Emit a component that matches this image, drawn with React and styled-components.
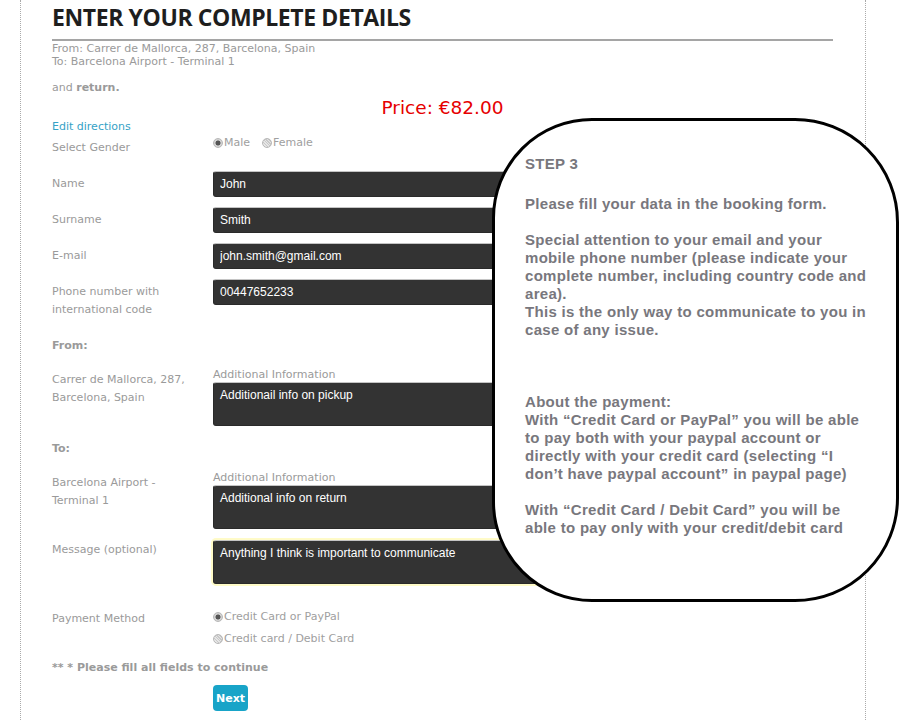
import React from 'react';
import styled, { createGlobalStyle } from 'styled-components';

const GlobalStyle = createGlobalStyle`
  body {
    margin: 0;
    background: #fff;
    font-family: "DejaVu Sans", Verdana, sans-serif;
    overflow: hidden;
  }
`;

const Page = styled.div`
  position: relative;
  box-sizing: border-box;
  width: 846px;
  min-height: 720px;
  margin-left: 20px;
  padding: 0 32px 0 31px;
  border-left: 1px dotted #aaa;
  border-right: 1px dotted #aaa;
`;

const Title = styled.h1`
  margin: 0;
  padding: 1px 0 6px;
  font-family: "Open Sans", sans-serif;
  font-size: 23px;
  letter-spacing: -0.4px;
  line-height: 32px;
  font-weight: 700;
  color: #1e1e1e;
  border-bottom: 2px solid #a5a5a5;
`;

const Route = styled.div`
  margin-top: 1px;
  font-size: 11px;
  line-height: 13px;
  color: #9a9a9a;

  b {
    font-weight: 700;
  }
`;

const Price = styled.div`
  margin-top: 3px;
  text-align: center;
  font-size: 18.5px;
  line-height: 22px;
  color: #e60000;
`;

const EditLink = styled.a`
  display: block;
  font-size: 11px;
  line-height: 15px;
  color: #36a2c6;
  text-decoration: none;
`;

const Row = styled.div`
  display: grid;
  grid-template-columns: 161px 1fr;
  align-items: start;
  margin-top: ${(p) => p.$top || 0}px;
`;

const Label = styled.div`
  padding-top: ${(p) => p.$pad ?? 4}px;
  font-size: 11px;
  line-height: 18px;
  color: #9a9a9a;
`;

const Section = styled.div`
  margin-top: ${(p) => p.$top}px;
  font-size: 11px;
  line-height: 18px;
  font-weight: 700;
  color: #9a9a9a;
`;

const RadioGroup = styled.div`
  display: flex;
  flex-direction: ${(p) => (p.$column ? 'column' : 'row')};
  gap: ${(p) => (p.$column ? 0 : 12)}px;
`;

const RadioItem = styled.label`
  display: flex;
  align-items: center;
  font-size: 11px;
  line-height: ${(p) => p.$lh || 18}px;
  color: #a0a0a0;
`;

const Dot = styled.span`
  box-sizing: border-box;
  width: 10px;
  height: 10px;
  margin-right: 1px;
  border-radius: 50%;
  border: 1px solid #b8b8b8;
  background: ${(p) =>
    p.$checked
      ? 'radial-gradient(circle, #555 0 2.2px, #d2d2d2 2.8px)'
      : 'repeating-linear-gradient(45deg, #e6e6e6 0 1px, #c8c8c8 1px 2px)'};
`;

const TextInput = styled.input`
  box-sizing: border-box;
  display: block;
  width: 340px;
  height: 26px;
  padding: 0 6px;
  border: 1px solid #2a2a2a;
  border-top-color: #c4c4c4;
  border-radius: 3px;
  background: #333;
  color: #fff;
  font-family: "Liberation Sans", Arial, sans-serif;
  font-size: 12px;
  outline: none;
`;

const Caption = styled.div`
  font-size: 11px;
  line-height: 14px;
  color: #9a9a9a;
`;

const TextArea = styled.textarea`
  box-sizing: border-box;
  display: block;
  width: 340px;
  height: ${(p) => p.$h || 44}px;
  padding: 5px 6px;
  resize: none;
  border: 1px solid #2a2a2a;
  border-top-color: #c4c4c4;
  border-radius: 3px;
  background: #333;
  color: #fff;
  font-family: "Liberation Sans", Arial, sans-serif;
  font-size: 12px;
  line-height: 14px;
  outline: none;
  box-shadow: ${(p) => (p.$glow ? '0 0 0 2px #fffbc8' : 'none')};
`;

const Note = styled.div`
  margin-top: 9px;
  font-size: 11px;
  line-height: 18px;
  font-weight: 700;
  color: #9a9a9a;
`;

const Actions = styled.div`
  margin: 8px 0 0 161px;
`;

const NextButton = styled.button`
  height: 26px;
  padding: 0 3px;
  border: 0;
  border-radius: 4px;
  background: #18a4c8;
  color: #fff;
  font-family: "DejaVu Sans", Verdana, sans-serif;
  font-size: 11px;
  font-weight: 700;
`;

const Bubble = styled.div`
  position: absolute;
  left: 471px;
  top: 118px;
  box-sizing: border-box;
  width: 407px;
  height: 484px;
  padding: 34px 0 0 30px;
  border: 3px solid #000;
  border-radius: 100px 104px 104px 100px;
  background: #fff;
  font-family: "Liberation Sans", Arial, sans-serif;
  font-size: 15px;
  letter-spacing: 0.3px;
  font-weight: 700;
  line-height: 18px;
  color: #78777d;
  white-space: nowrap;
`;

const Para = styled.p`
  margin: 0 0 ${(p) => p.$gap ?? 18}px;
`;

const Radio = ({ checked, lh, children }) => (
  <RadioItem $lh={lh}>
    <Dot $checked={checked} />
    {children}
  </RadioItem>
);

export default function App() {
  return (
    <>
      <GlobalStyle />
      <Page>
        <Title>ENTER YOUR COMPLETE DETAILS</Title>
        <Route>
          From: Carrer de Mallorca, 287, Barcelona, Spain
          <br />
          To: Barcelona Airport - Terminal 1
          <br />
          <br />
          and <b>return.</b>
        </Route>
        <Price>Price: €82.00</Price>
        <EditLink href="#">Edit directions</EditLink>

        <Row>
          <Label $pad={5}>Select Gender</Label>
          <RadioGroup>
            <Radio checked>Male</Radio>
            <Radio>Female</Radio>
          </RadioGroup>
        </Row>

        <Row $top={14}>
          <Label>Name</Label>
          <TextInput readOnly value="John" />
        </Row>
        <Row $top={10}>
          <Label>Surname</Label>
          <TextInput readOnly value="Smith" />
        </Row>
        <Row $top={10}>
          <Label>E-mail</Label>
          <TextInput readOnly value="john.smith@gmail.com" />
        </Row>
        <Row $top={10}>
          <Label>
            Phone number with
            <br />
            international code
          </Label>
          <TextInput readOnly value="00447652233" />
        </Row>

        <Section $top={18}>From:</Section>
        <Row $top={13}>
          <Label $pad={3}>
            Carrer de Mallorca, 287,
            <br />
            Barcelona, Spain
          </Label>
          <div>
            <Caption>Additional Information</Caption>
            <TextArea readOnly value="Additionail info on pickup" />
          </div>
        </Row>

        <Section $top={14}>To:</Section>
        <Row $top={13}>
          <Label $pad={3}>
            Barcelona Airport -
            <br />
            Terminal 1
          </Label>
          <div>
            <Caption>Additional Information</Caption>
            <TextArea readOnly value="Additional info on return" />
          </div>
        </Row>

        <Row $top={11}>
          <Label $pad={1}>Message (optional)</Label>
          <TextArea $glow readOnly value="Anything I think is important to communicate" />
        </Row>

        <Row $top={22}>
          <Label $pad={4}>Payment Method</Label>
          <RadioGroup $column>
            <Radio checked lh={22}>Credit Card or PayPal</Radio>
            <Radio lh={22}>Credit card / Debit Card</Radio>
          </RadioGroup>
        </Row>

        <Note>** * Please fill all fields to continue</Note>
        <Actions>
          <NextButton>Next</NextButton>
        </Actions>

        <Bubble>
          <Para $gap={22}>STEP 3</Para>
          <Para>Please fill your data in the booking form.</Para>
          <Para $gap={54}>
            Special attention to your email and your
            <br />
            mobile phone number (please indicate your
            <br />
            complete number, including country code and
            <br />
            area).
            <br />
            This is the only way to communicate to you in
            <br />
            case of any issue.
          </Para>
          <Para>
            About the payment:
            <br />
            With “Credit Card or PayPal” you will be able
            <br />
            to pay both with your paypal account or
            <br />
            directly with your credit card (selecting “I
            <br />
            don’t have paypal account” in paypal page)
          </Para>
          <Para>
            With “Credit Card / Debit Card” you will be
            <br />
            able to pay only with your credit/debit card
          </Para>
        </Bubble>
      </Page>
    </>
  );
}
